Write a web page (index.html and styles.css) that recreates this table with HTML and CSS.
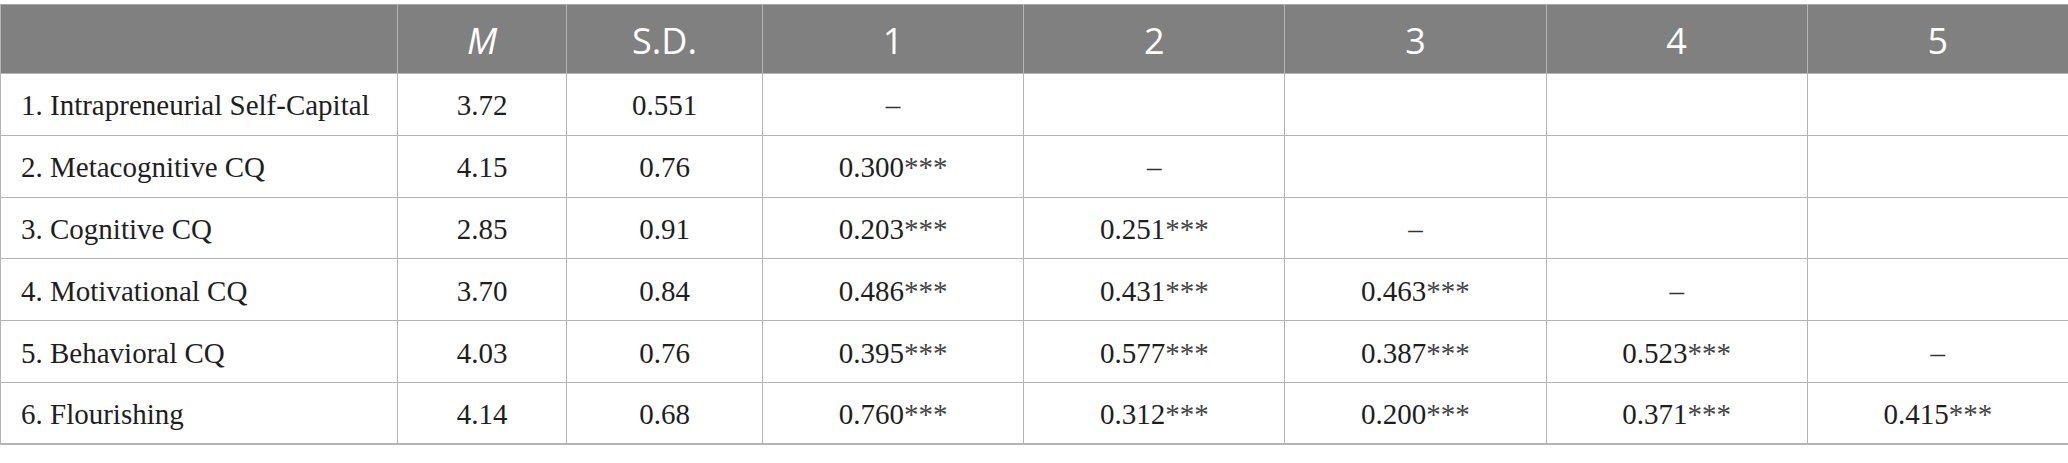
FILE: index.html
```html
<!DOCTYPE html>
<html lang="en">
<head>
<meta charset="utf-8">
<title>Correlation table</title>
<link rel="stylesheet" href="styles.css">
</head>
<body>
<table class="corr">
  <colgroup>
    <col class="c-label">
    <col class="c-m">
    <col class="c-sd">
    <col class="c-n">
    <col class="c-n">
    <col class="c-n">
    <col class="c-n">
    <col class="c-n">
  </colgroup>
  <thead>
    <tr>
      <th></th>
      <th><i>M</i></th>
      <th>S.D.</th>
      <th>1</th>
      <th>2</th>
      <th>3</th>
      <th>4</th>
      <th>5</th>
    </tr>
  </thead>
  <tbody>
    <tr>
      <td class="label">1. Intrapreneurial Self-Capital</td>
      <td>3.72</td><td>0.551</td>
      <td class="dash">–</td><td></td><td></td><td></td><td></td>
    </tr>
    <tr>
      <td class="label">2. Metacognitive CQ</td>
      <td>4.15</td><td>0.76</td>
      <td>0.300<span class="star">***</span></td><td class="dash">–</td><td></td><td></td><td></td>
    </tr>
    <tr>
      <td class="label">3. Cognitive CQ</td>
      <td>2.85</td><td>0.91</td>
      <td>0.203<span class="star">***</span></td><td>0.251<span class="star">***</span></td><td class="dash">–</td><td></td><td></td>
    </tr>
    <tr>
      <td class="label">4. Motivational CQ</td>
      <td>3.70</td><td>0.84</td>
      <td>0.486<span class="star">***</span></td><td>0.431<span class="star">***</span></td><td>0.463<span class="star">***</span></td><td class="dash">–</td><td></td>
    </tr>
    <tr>
      <td class="label">5. Behavioral CQ</td>
      <td>4.03</td><td>0.76</td>
      <td>0.395<span class="star">***</span></td><td>0.577<span class="star">***</span></td><td>0.387<span class="star">***</span></td><td>0.523<span class="star">***</span></td><td class="dash">–</td>
    </tr>
    <tr>
      <td class="label">6. Flourishing</td>
      <td>4.14</td><td>0.68</td>
      <td>0.760<span class="star">***</span></td><td>0.312<span class="star">***</span></td><td>0.200<span class="star">***</span></td><td>0.371<span class="star">***</span></td><td>0.415<span class="star">***</span></td>
    </tr>
  </tbody>
</table>
</body>
</html>
```

FILE: styles.css
```css
html, body {
  margin: 0;
  padding: 0;
  background: #ffffff;
}

body {
  padding-top: 4px;
}

.corr {
  width: 2068px;
  table-layout: fixed;
  border-collapse: collapse;
  font-family: "Liberation Serif", "Times New Roman", serif;
  font-size: 29px;
  color: #1e1e1e;
}

.c-label { width: 397px; }
.c-m { width: 169px; }
.c-sd { width: 196px; }
.c-n { width: 261.2px; }

.corr th,
.corr td {
  border: 1px solid #b4b4b4;
  text-align: center;
  vertical-align: middle;
  padding: 3px 0 0;
}

.corr thead tr {
  height: 69px;
}

.corr thead th {
  background: #7f807f;
  color: #ffffff;
  font-family: "Open Sans", "Noto Sans", sans-serif;
  font-weight: 400;
  font-size: 36px;
  padding-top: 2px;
  border-top-color: #a9a9a9;
}

.corr thead th i {
  font-style: italic;
}

.corr tbody tr {
  height: 61.83px;
}

.corr tbody tr:last-child td {
  border-bottom: 2px solid #b4b4b4;
}

.corr td.label {
  text-align: left;
  padding-left: 20px;
}

.corr td.dash {
  color: #333333;
}

.star {
  color: #444444;
}
```
